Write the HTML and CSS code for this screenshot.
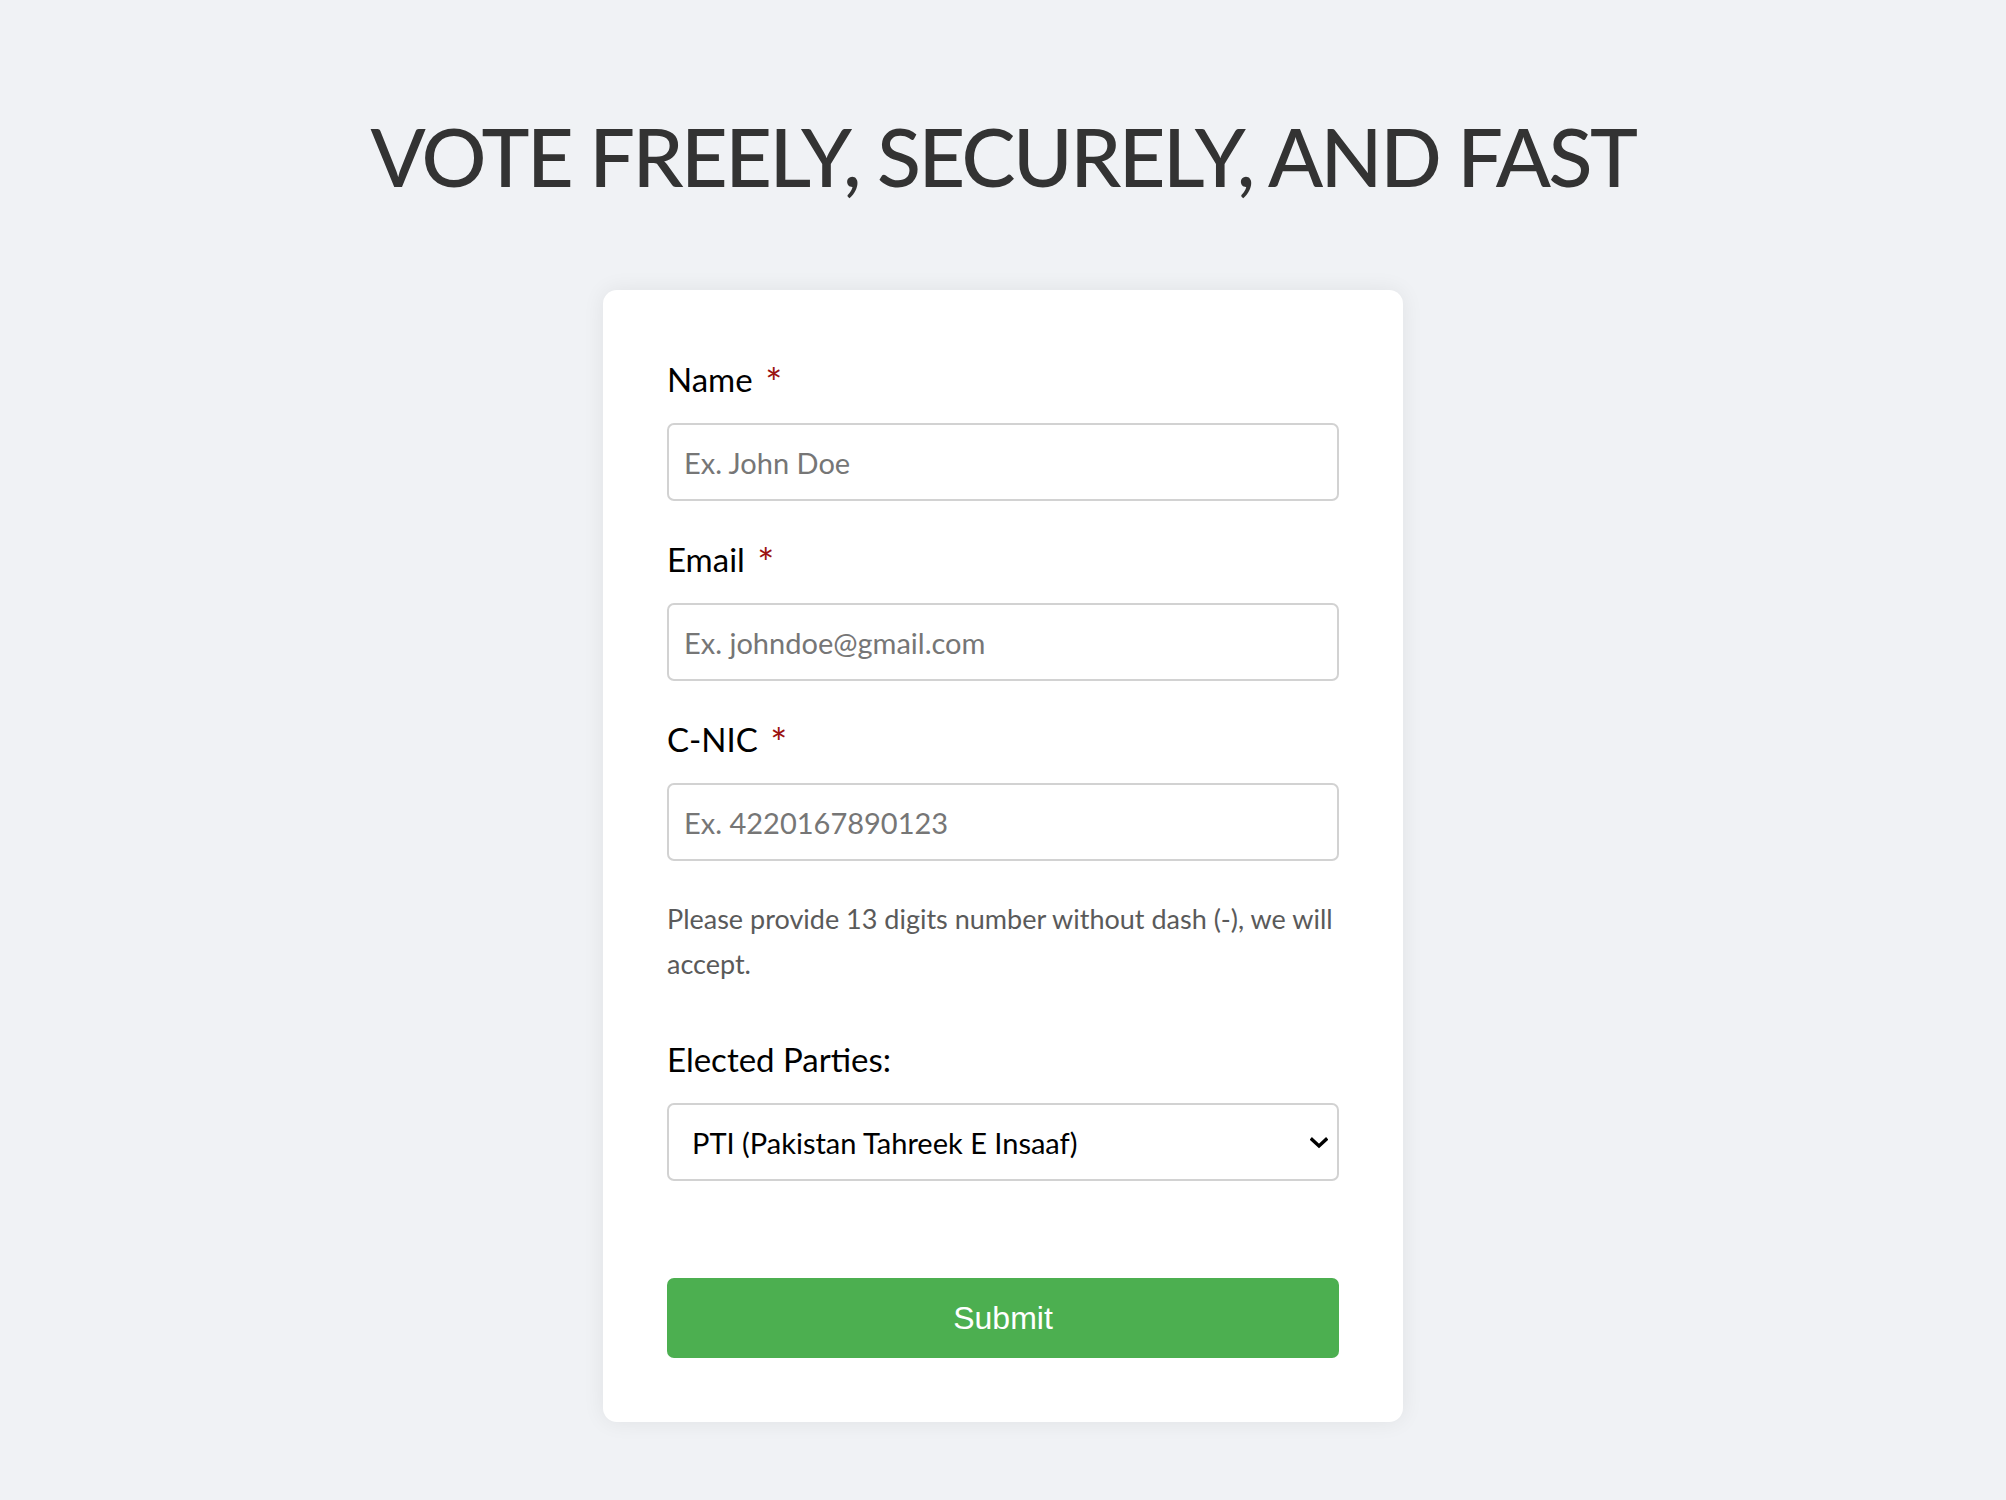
FILE: index.html
```html
<!DOCTYPE html>
<html lang="en">
<head>
<meta charset="utf-8">
<title>Vote</title>
<link rel="stylesheet" href="styles.css">
</head>
<body>
<main class="page">
  <h1 class="title">VOTE FREELY, SECURELY, AND FAST</h1>
  <form class="card">
    <label class="label" for="name">Name <span class="req">*</span></label>
    <input class="field" id="name" type="text" placeholder="Ex. John Doe">

    <label class="label gap" for="email">Email <span class="req">*</span></label>
    <input class="field" id="email" type="email" placeholder="Ex. johndoe@gmail.com">

    <label class="label gap" for="cnic">C-NIC <span class="req">*</span></label>
    <input class="field" id="cnic" type="text" placeholder="Ex. 4220167890123">

    <p class="help">Please provide 13 digits number without dash (-), we will accept.</p>

    <label class="label parties" for="party">Elected Parties:</label>
    <div class="select-wrap">
      <select class="field select" id="party">
        <option>PTI (Pakistan Tahreek E Insaaf)</option>
        <option>PML-N (Pakistan Muslim League N)</option>
        <option>PPP (Pakistan Peoples Party)</option>
      </select>
      <svg class="chev" width="18" height="12" viewBox="0 0 18 12" aria-hidden="true"><path d="M2 2.5 L9 9 L16 2.5" fill="none" stroke="#000" stroke-width="3.4" stroke-linecap="square"/></svg>
    </div>

    <button class="submit" type="button">Submit</button>
  </form>
</main>
</body>
</html>
```

FILE: styles.css
```css
* { box-sizing: border-box; }

html, body {
  margin: 0;
  padding: 0;
}

body {
  background: #f0f2f5;
  font-family: "Lato", "Open Sans", sans-serif;
  color: #000;
  min-height: 1500px;
}

.page {
  display: flex;
  flex-direction: column;
  align-items: center;
  padding-top: 107px;
}

.title {
  margin: 0;
  font-family: "Lato", sans-serif;
  font-weight: 500;
  font-size: 81px;
  line-height: 97px;
  color: #333;
  letter-spacing: -2.5px;
}

.card {
  margin-top: 86px;
  width: 800px;
  background: #fff;
  border-radius: 14px;
  box-shadow: 0 0 22px rgba(0, 0, 0, 0.07);
  padding: 69px 64px 64px;
  display: flex;
  flex-direction: column;
}

.label {
  display: block;
  font-size: 33px;
  line-height: 40px;
  margin-bottom: 24px;
  color: #000;
}

.label.gap { margin-top: 38px; }
.label.parties { margin-top: 53px; }

.req {
  color: #9b1111;
  margin-left: 4px;
  font-size: 40px;
  line-height: 0;
  vertical-align: -6px;
}

.field {
  display: block;
  width: 100%;
  height: 78px;
  border: 2px solid #d2d2d2;
  border-radius: 7px;
  padding: 0 15px;
  font-family: "Lato", sans-serif;
  font-size: 29px;
  color: #000;
  background: #fff;
  outline: none;
}

.field::placeholder { color: #767676; }

.help {
  margin: 35px 0 0;
  font-size: 27px;
  line-height: 45px;
  color: #5a5a5a;
}

.select-wrap {
  position: relative;
}

.select {
  appearance: none;
  -webkit-appearance: none;
  padding-left: 23px;
}

.chev {
  position: absolute;
  right: 11px;
  top: 34px;
  pointer-events: none;
}

.submit {
  margin-top: 97px;
  height: 80px;
  width: 100%;
  border: none;
  border-radius: 7px;
  background: #4caf50;
  color: #fff;
  font-family: "Liberation Sans", Arial, sans-serif;
  font-size: 32px;
}
```
